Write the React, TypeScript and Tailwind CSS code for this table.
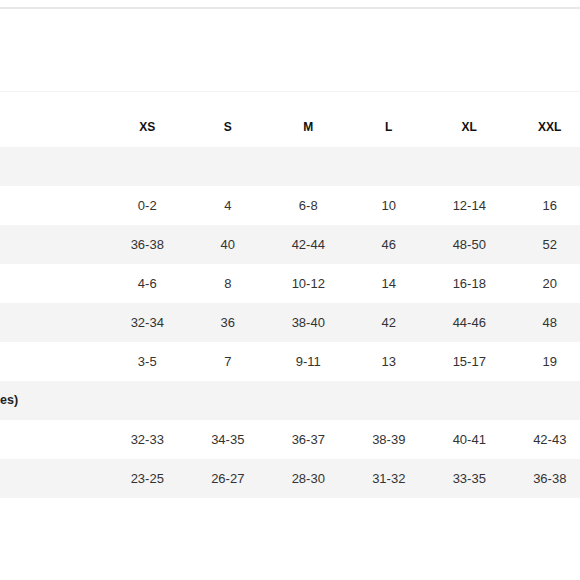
const sizes = ['XS', 'S', 'M', 'L', 'XL', 'XXL'];

const rows: { label?: string; values?: string[] }[] = [
  {},
  { values: ['0-2', '4', '6-8', '10', '12-14', '16'] },
  { values: ['36-38', '40', '42-44', '46', '48-50', '52'] },
  { values: ['4-6', '8', '10-12', '14', '16-18', '20'] },
  { values: ['32-34', '36', '38-40', '42', '44-46', '48'] },
  { values: ['3-5', '7', '9-11', '13', '15-17', '19'] },
  { label: 'es)' },
  { values: ['32-33', '34-35', '36-37', '38-39', '40-41', '42-43'] },
  { values: ['23-25', '26-27', '28-30', '31-32', '33-35', '36-38'] },
];

export default function App() {
  return (
    <div
      className="w-[580px] h-[580px] overflow-hidden bg-white text-[#333]"
      style={{ fontFamily: '"Liberation Sans", Arial, sans-serif' }}
    >
      <div className="pt-[7px]">
        <div className="h-[2px] bg-[#e8e8e8]" />
      </div>
      <div className="h-[82px]" />
      <div className="h-px bg-[#f2f2f2]" />

      <div className="w-[620px]">
        <div className="flex h-[55px] items-end pb-[11px]">
          <div className="w-[107px] shrink-0" />
          {sizes.map((s) => (
            <div key={s} className="w-[80.5px] shrink-0 text-center text-[12px] font-bold text-[#111]">
              {s}
            </div>
          ))}
        </div>

        {rows.map((r, i) => (
          <div
            key={i}
            className={`flex h-[39px] items-center ${i % 2 === 0 ? 'bg-[#f4f4f4]' : 'bg-white'}`}
          >
            <div className="w-[107px] shrink-0 whitespace-nowrap text-[12.5px] font-bold text-[#222]">
              {r.label}
            </div>
            {r.values?.map((v, j) => (
              <div key={j} className="w-[80.5px] shrink-0 text-center text-[13px]">
                {v}
              </div>
            ))}
          </div>
        ))}
      </div>
    </div>
  );
}
